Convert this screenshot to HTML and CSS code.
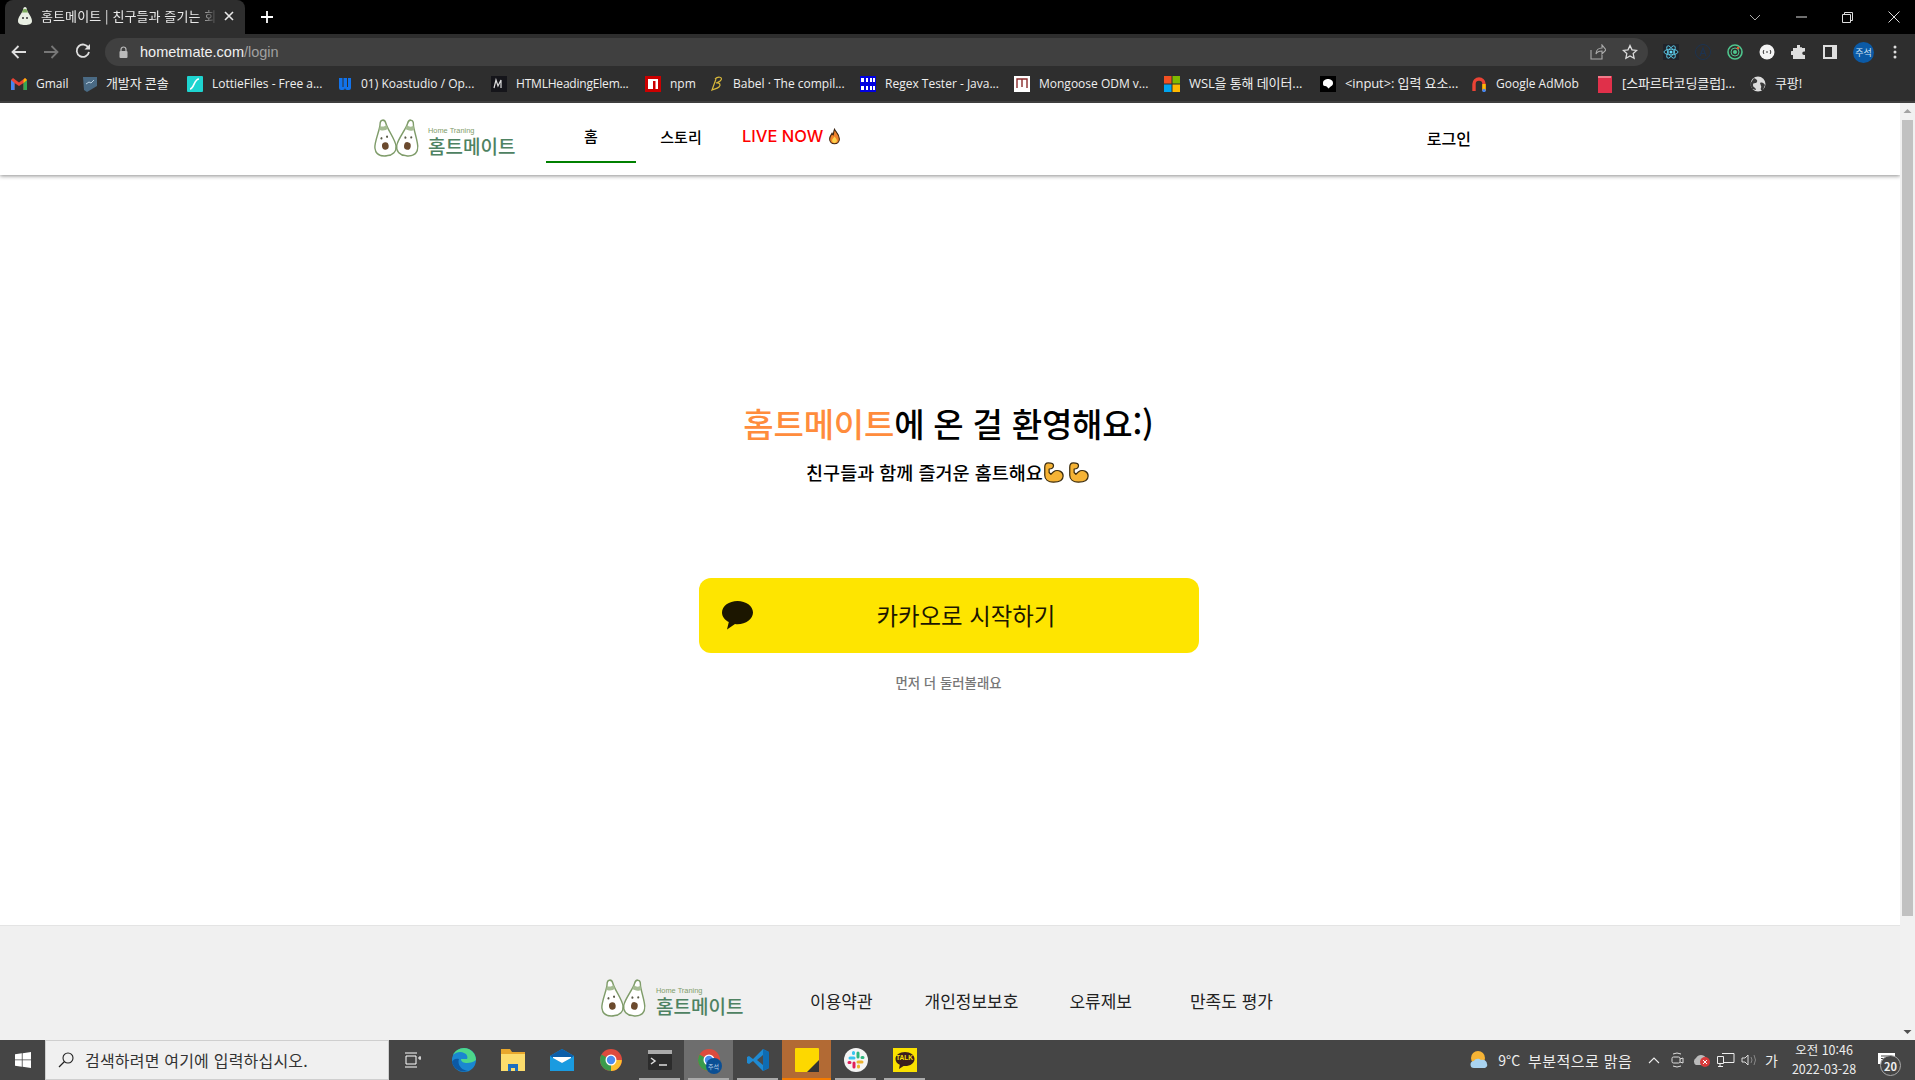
FILE: index.html
```html
<!DOCTYPE html>
<html lang="ko">
<head>
<meta charset="utf-8">
<title>홈트메이트</title>
<link rel="stylesheet" href="styles.css">
</head>
<body>
<svg class="defs" width="0" height="0">
  <defs>
    <symbol id="avocado" viewBox="0 0 26 38" preserveAspectRatio="none">
      <path d="M13 1c-2 0-3 1-3.400 4C9 10 1 22 1 28c0 6 5 9 12 9s12-3 12-9c0-6-8-18-8.600-23C16 2 15 1 13 1z" fill="#fff" stroke="#7f9c6a" stroke-width="1.600"/>
      <path d="M9.500 6c1 2 6 2 7 0l1.500 4c-2 2-8 2-10 0z" fill="#a6bd94"/>
      <circle cx="13" cy="27" r="3.800" fill="#6b4a2e"/>
      <circle cx="9.500" cy="19" r="1.200" fill="#5b5b4a"/>
      <circle cx="16" cy="18" r="1.200" fill="#5b5b4a"/>
    </symbol>
    <symbol id="biceps" viewBox="0 0 24 24">
      <path d="M6 1C3 1 2 3 2 6v9c0 5 4 8 10 8s11-2 11-7c0-5-5-7-9-6-2 1-4 3-5 4L7 12V8c2 0 5-1 5-4 0-2-3-3-6-3z" fill="#f5b335" stroke="#3a2c10" stroke-width="1.400" stroke-linejoin="round"/>
    </symbol>
    <symbol id="fire" viewBox="0 0 16 20">
      <path d="M8 1c1 3 6 6 6 12 0 4-3 6-6 6s-6-2-6-6c0-3 2-5 3-7 .5 1 1 2 1.500 2C7 6 7 3 8 1z" fill="#f0822a" stroke="#3a2410" stroke-width="1.300"/>
      <path d="M8 10c1 2 3 3 3 5 0 2-1.500 3-3 3s-3-1-3-3c0-2 2-3 3-5z" fill="#fcd34d"/>
    </symbol>
    <symbol id="chromeicon" viewBox="0 0 24 24">
      <circle cx="12" cy="12" r="11" fill="#dd4b3e"/>
      <path d="M12 12L2.500 6.500A11 11 0 0 0 12 23z" fill="#3a9b4b"/>
      <path d="M12 12h10.800A11 11 0 0 1 12 23z" fill="#fbc02d"/>
      <circle cx="12" cy="12" r="5.500" fill="#fff"/>
      <circle cx="12" cy="12" r="4.200" fill="#4a8df0"/>
    </symbol>
  </defs>
</svg>

<div class="tabstrip">
  <div class="tab">
    <svg class="tab-fav" width="16" height="18" viewBox="0 0 16 18"><path d="M8 0c-1 0-2 1-2 3C5 6 1 10 1 14c0 3 3 4 7 4s7-1 7-4c0-4-4-8-5-11 0-2-1-3-2-3z" fill="#e9efe3"/><path d="M5 5.500h6L9.500 2h-3z" fill="#7fae5f"/><circle cx="6" cy="11" r="1" fill="#333"/><circle cx="10" cy="11" r="1" fill="#333"/></svg>
    <span class="tab-title">홈트메이트 | 친구들과 즐기는 회</span>
    <svg class="tab-close" width="10" height="10" viewBox="0 0 10 10"><path d="M1 1l8 8M9 1l-8 8" stroke="#e8e8e8" stroke-width="1.600"/></svg>
  </div>
  <svg class="tab-new" width="12" height="12" viewBox="0 0 12 12"><path d="M6 0v12M0 6h12" stroke="#fff" stroke-width="1.800"/></svg>
  <div class="window-controls">
    <svg class="wc wc-chev" width="12" height="7" viewBox="0 0 12 7"><path d="M1 1l5 5 5-5" fill="none" stroke="#aaa"/></svg>
    <svg class="wc wc-min" width="11" height="2" viewBox="0 0 11 2"><path d="M0 1h11" stroke="#ddd"/></svg>
    <svg class="wc wc-max" width="11" height="11" viewBox="0 0 11 11"><path d="M.5 2.500h8v8h-8zM2.500 2.500v-2h8v8h-2" fill="none" stroke="#ddd"/></svg>
    <svg class="wc" width="12" height="12" viewBox="0 0 12 12"><path d="M.5.500l11 11M11.500.500l-11 11" stroke="#ddd"/></svg>
  </div>
</div>

<div class="toolbar">
  <svg class="nav-ic" width="16" height="14" viewBox="0 0 16 14"><path d="M15 7H2M7.500 1L1.500 7l6 6" fill="none" stroke="#dedede" stroke-width="1.800"/></svg>
  <svg class="nav-ic" width="16" height="14" viewBox="0 0 16 14"><path d="M1 7h13M8.500 1l6 6-6 6" fill="none" stroke="#777" stroke-width="1.800"/></svg>
  <svg class="nav-ic" width="16" height="16" viewBox="0 0 16 16"><path d="M13.500 5A6.200 6.200 0 1 0 14 9" fill="none" stroke="#dedede" stroke-width="1.800"/><path d="M15 1v5.500H9.500z" fill="#dedede"/></svg>
  <div class="omnibox">
    <svg class="lock" width="9" height="12" viewBox="0 0 9 12"><path d="M2 5V3.500a2.500 2.500 0 0 1 5 0V5" fill="none" stroke="#bbb" stroke-width="1.200"/><rect x=".5" y="5" width="8" height="7" rx="1" fill="#bbb"/></svg>
    <span class="url">hometmate.com<span class="url-path">/login</span></span>
    <svg class="omni-ic" width="16" height="16" viewBox="0 0 16 16"><path d="M1 6v9h11v-4M6 10c0-4 3-6 6-6V1l4 5-4 4V7c-3 0-5 1-6 3z" fill="none" stroke="#aaa" stroke-width="1.100"/></svg>
    <svg class="omni-ic" width="16" height="16" viewBox="0 0 16 16"><path d="M8 1.500l2 4.300 4.700.6-3.500 3.200.9 4.700L8 12l-4.100 2.300.9-4.700L1.300 6.400 6 5.800z" fill="none" stroke="#ddd" stroke-width="1.300"/></svg>
  </div>
  <div class="ext-row">
    <svg width="16" height="16" viewBox="0 0 16 16"><rect width="16" height="16" fill="#20232a"/><circle cx="8" cy="8" r="1.500" fill="#61dafb"/><g fill="none" stroke="#61dafb" stroke-width=".8"><ellipse cx="8" cy="8" rx="7" ry="2.800"/><ellipse cx="8" cy="8" rx="7" ry="2.800" transform="rotate(60 8 8)"/><ellipse cx="8" cy="8" rx="7" ry="2.800" transform="rotate(120 8 8)"/></g></svg>
    <svg width="16" height="16" viewBox="0 0 16 16"><circle cx="8" cy="8" r="7.500" fill="none" stroke="#1d3350"/><path d="M5 12l3-8 3 8M6 9.500h4" fill="none" stroke="#1d3350" stroke-width="1.200"/></svg>
    <svg width="16" height="16" viewBox="0 0 16 16"><circle cx="8" cy="8" r="7" fill="none" stroke="#4fc58d" stroke-width="1.600"/><circle cx="8" cy="8" r="4" fill="none" stroke="#4fc58d"/><circle cx="8" cy="8" r="2" fill="#4fc58d"/><circle cx="11" cy="4" r="1.300" fill="#e4572e"/></svg>
    <svg width="16" height="16" viewBox="0 0 16 16"><circle cx="8" cy="8" r="7.500" fill="#f3f3f3"/><path d="M5 6c-1 1-1 3 0 4M11 6c1 1 1 3 0 4M7 8h2" fill="none" stroke="#333"/></svg>
    <svg width="16" height="16" viewBox="0 0 16 16"><path d="M6 1h3v2a1.500 1.500 0 0 0 2 0V4h3v3.500h-1a1.700 1.700 0 0 0 0 3.500h1v4H2v-4H1a2 2 0 0 1 0-4h1V4h4z" fill="#dedede"/></svg>
    <svg width="14" height="14" viewBox="0 0 14 14"><path d="M0 0h14v14H0zM2 2v10h7V2z" fill="#dedede" fill-rule="evenodd"/></svg>
    <span class="avatar">주석</span>
    <svg width="4" height="14" viewBox="0 0 4 14"><circle cx="2" cy="2" r="1.500" fill="#ddd"/><circle cx="2" cy="7" r="1.500" fill="#ddd"/><circle cx="2" cy="12" r="1.500" fill="#ddd"/></svg>
  </div>
</div>

<div class="bookmarks">
  <div class="bm"><svg width="16" height="12" viewBox="0 0 16 12"><path d="M0 2v10h3.500V5L8 8l4.500-3v7H16V2l-2-2-6 4.500L2 0z" fill="#ea4335"/><path d="M0 2v10h3.500V5z" fill="#4285f4"/><path d="M16 2v10h-3.500V5z" fill="#34a853"/><path d="M14 0l2 2-3.500 3V2z" fill="#fbbc05"/></svg><span class="bm-t w31">Gmail</span></div>
  <div class="bm"><svg width="14" height="16" viewBox="0 0 14 16"><path d="M0 1h14v9l-10 6-3-2z" fill="#4a6a84"/><path d="M3 8l3-2 2 1 3-3" fill="none" stroke="#b9cfe0"/></svg><span class="bm-t ko w65">개발자 콘솔</span></div>
  <div class="bm"><svg width="16" height="16" viewBox="0 0 16 16"><rect width="16" height="16" rx="1" fill="#1ed4d0"/><path d="M3 13c4 0 4-10 9-10" fill="none" stroke="#fff" stroke-width="1.600"/></svg><span class="bm-t w110">LottieFiles - Free a...</span></div>
  <div class="bm"><svg width="14" height="14" viewBox="0 0 14 14"><path d="M1 1v10q0 2 2 2h2q2 0 2-2q0 2 2 2h2q2 0 2-2V1h-3v9H9V1H5.500v9h-1V1z" fill="#1273eb"/></svg><span class="bm-t w114">01) Koastudio / Op...</span></div>
  <div class="bm"><svg width="16" height="16" viewBox="0 0 16 16"><rect width="16" height="16" fill="#15151a"/><path d="M3 12l2-8 2 6 3-6 0 8" fill="none" stroke="#ddd" stroke-width="1.200"/></svg><span class="bm-t tight w113">HTMLHeadingElem...</span></div>
  <div class="bm"><svg width="16" height="16" viewBox="0 0 16 16"><rect width="16" height="16" fill="#cb0000"/><rect x="3" y="3" width="10" height="10" fill="#fff"/><rect x="8" y="5" width="2.500" height="8" fill="#cb0000"/></svg><span class="bm-t w24">npm</span></div>
  <div class="bm"><svg width="14" height="16" viewBox="0 0 14 16"><path d="M5 3c3-3 8-2 6 1-1 2-3 2-5 3 4-1 5 2 3 4-2 2-5 2-7 3L6 3" fill="none" stroke="#d9b93b" stroke-width="1.200"/></svg><span class="bm-t w111">Babel · The compil...</span></div>
  <div class="bm"><svg width="16" height="16" viewBox="0 0 16 16"><rect width="16" height="16" fill="#0000e0"/><path d="M1 2h3v4H1zM6 2h2v4H6zM10 2h2v4h-2zM13 2h2v4h-2zM1 10h3v4H1zM6 10h2v4H6zM10 10h2v4h-2zM13 10h2v4h-2z" fill="#fff"/></svg><span class="bm-t w113">Regex Tester - Java...</span></div>
  <div class="bm"><svg width="16" height="16" viewBox="0 0 16 16"><rect width="16" height="16" fill="#fff"/><path d="M3 12V3h10v9M8 3v8" fill="none" stroke="#8a2c2c" stroke-width="1.400"/></svg><span class="bm-t w109">Mongoose ODM v...</span></div>
  <div class="bm"><svg width="16" height="16" viewBox="0 0 16 16"><rect width="7.500" height="7.500" fill="#f25022"/><rect x="8.500" width="7.500" height="7.500" fill="#7fba00"/><rect y="8.500" width="7.500" height="7.500" fill="#00a4ef"/><rect x="8.500" y="8.500" width="7.500" height="7.500" fill="#ffb900"/></svg><span class="bm-t ko w115">WSL을 통해 데이터...</span></div>
  <div class="bm"><svg width="16" height="16" viewBox="0 0 16 16"><rect width="16" height="16" fill="#000"/><path d="M3 7c0-3 3-4 5-4s5 1 5 4-2 3-3 4-1 2-2 1-1-2-3-2-2-1-2-3z" fill="#fff"/></svg><span class="bm-t ko w110">&lt;input&gt;: 입력 요소...</span></div>
  <div class="bm"><svg width="16" height="16" viewBox="0 0 16 16"><path d="M3 15V8a5 5 0 0 1 10 0v7" fill="none" stroke="#ea4335" stroke-width="3.400"/><path d="M13 8v7" stroke="#fbbc05" stroke-width="3.400"/><circle cx="13" cy="14.500" r="1.700" fill="#4285f4"/></svg><span class="bm-t w85">Google AdMob</span></div>
  <div class="bm"><svg width="16" height="18" viewBox="0 0 16 18"><path d="M1 1h14v17H1z" fill="#e0304a"/><path d="M1 1h13v2H1z" fill="#f27a8a"/></svg><span class="bm-t ko w112">[스파르타코딩클럽]...</span></div>
  <div class="bm"><svg width="16" height="16" viewBox="0 0 16 16"><circle cx="8" cy="8" r="7.500" fill="#ddd"/><path d="M4 2c2 1 4 2 3 4S3 6 3 9s3 2 3 5l-4-1-2-5zM10 7c2-1 4 0 5 2l-2 5-2 0c-1-2 1-3 0-4z" fill="#3a3a3a"/></svg><span class="bm-t ko w29">쿠팡!</span></div>
</div>

<div class="viewport">
  <div class="page">
    <header class="site-header">
      <a class="logo">
        <span class="logo-marks">
          <svg class="mark-l" width="23" height="38"><use href="#avocado"/></svg>
          <svg class="mark-r" width="23" height="38"><use href="#avocado"/></svg>
        </span>
        <span class="logo-text"><span class="logo-sub">Home Traning</span><span class="logo-name">홈트메이트</span></span>
      </a>
      <nav class="site-nav">
        <a class="nav-item active">홈</a>
        <a class="nav-item">스토리</a>
        <a class="nav-item live">LIVE NOW <svg class="fire" width="13" height="17"><use href="#fire"/></svg></a>
      </nav>
      <a class="login">로그인</a>
    </header>
    <main class="login-main">
      <h1 class="headline"><span class="brand">홈트메이트</span>에 온 걸 환영해요:)</h1>
      <p class="subline">친구들과 함께 즐거운 홈트해요<svg width="21" height="21"><use href="#biceps"/></svg><svg class="arm2" width="21" height="21"><use href="#biceps"/></svg></p>
      <a class="kakao-btn">
        <svg class="kakao-ic" width="31" height="29" viewBox="0 0 31 29"><path d="M15.500 0C7 0 0 5 0 11.500c0 4 2.800 7.600 6.800 9.600L5 28.500l8-5.500c.8.100 1.700.2 2.500.2 8.500 0 15.500-5.200 15.500-11.700S24 0 15.500 0z" fill="#1c1600"/></svg>
        <span>카카오로 시작하기</span>
      </a>
      <a class="browse">먼저 더 둘러볼래요</a>
    </main>
    <footer class="site-footer">
      <a class="logo">
        <span class="logo-marks">
          <svg class="mark-l" width="23" height="38"><use href="#avocado"/></svg>
          <svg class="mark-r" width="23" height="38"><use href="#avocado"/></svg>
        </span>
        <span class="logo-text"><span class="logo-sub">Home Traning</span><span class="logo-name">홈트메이트</span></span>
      </a>
      <a class="foot-link l1">이용약관</a>
      <a class="foot-link l2">개인정보보호</a>
      <a class="foot-link l3">오류제보</a>
      <a class="foot-link l4">만족도 평가</a>
    </footer>
  </div>
  <div class="scrollbar">
    <svg width="15" height="17" viewBox="0 0 15 17"><path d="M7.500 6l-4 4h8z" fill="#a3a3a3"/></svg>
    <div class="thumb"></div>
    <svg width="15" height="17" viewBox="0 0 15 17"><path d="M7.500 11l-4-4h8z" fill="#505050"/></svg>
  </div>
</div>

<div class="taskbar">
  <div class="start"><svg width="16" height="16" viewBox="0 0 16 16"><path d="M0 2.300l6.800-1v6.200H0zM7.600 1.200L16 0v7.500H7.600zM0 8.300h6.800v6.400l-6.800-1zM7.600 8.300H16V16l-8.400-1.200z" fill="#fff"/></svg></div>
  <div class="search">
    <svg width="16" height="16" viewBox="0 0 16 16"><circle cx="10" cy="6" r="5" fill="none" stroke="#222" stroke-width="1.100"/><path d="M6.500 9.500L1 15" stroke="#222" stroke-width="1.200"/></svg>
    <span>검색하려면 여기에 입력하십시오.</span>
  </div>
  <div class="tb-apps">
    <div class="app taskview"><svg width="16" height="16" viewBox="0 0 16 16"><path d="M0 1h12M0 15h12M1 4h10v8H1zM14 5h2v2h-2z" fill="none" stroke="#fff"/></svg></div>
    <div class="app"><svg width="24" height="24" viewBox="0 0 24 24"><circle cx="12" cy="12" r="12" fill="#1a87d0"/><path d="M24 12c0-6-5-12-12-12C7 0 3 3 1 7c3-3 8-4 11-2 3 1 4 4 3 6h-6c0 3 3 4 6 4 3 0 7-1 9-3z" fill="#4dd88a"/><path d="M7 11c-2 5 2 11 9 12-8 2-15-3-16-9 1-2 3-4 7-3z" fill="#0c59a4"/></svg></div>
    <div class="app"><svg width="24" height="22" viewBox="0 0 24 22"><path d="M0 0h9l2 3h13v19H0z" fill="#e8a72c"/><path d="M0 5h24v17H0z" fill="#fcdc6c"/><path d="M7 22v-7h10v7h-3v-3h-4v3z" fill="#1d6fc0"/></svg></div>
    <div class="app"><svg width="24" height="22" viewBox="0 0 24 22"><path d="M0 7L12 0l12 7v15H0z" fill="#1a9be0"/><path d="M0 7l12 7 12-7-12-7z" fill="#0c5ea8"/><path d="M3 8h18v1l-9 5-9-5z" fill="#fff"/></svg></div>
    <div class="app"><svg width="24" height="24"><use href="#chromeicon"/></svg></div>
    <div class="app on"><svg width="24" height="20" viewBox="0 0 24 20"><rect width="24" height="20" rx="1" fill="#2c2c2c"/><rect width="24" height="4" fill="#aaa"/><path d="M3 8l4 3-4 3" fill="none" stroke="#ddd" stroke-width="1.500"/><path d="M11 15h8" stroke="#ddd" stroke-width="1.500"/></svg></div>
    <div class="app on active"><span class="chrome-badged"><svg width="24" height="24"><use href="#chromeicon"/></svg><span class="mini-avatar">주석</span></span></div>
    <div class="app on"><svg width="24" height="24" viewBox="0 0 24 24"><path d="M17 1l6 3v16l-6 3L7 13l-4 3-2-1V9l2-1 4 3z" fill="#1f8ad2"/><path d="M17 1l6 3v16l-6 3z" fill="#0e6cb3"/><path d="M17 7l-6 5 6 5z" fill="#4a4a4a"/></svg></div>
    <div class="app on sticky"><svg width="24" height="24" viewBox="0 0 24 24"><rect width="24" height="24" rx="1" fill="#fdd800"/><path d="M24 12v12H12z" fill="#333"/></svg></div>
    <div class="app on"><svg width="24" height="24" viewBox="0 0 24 24"><circle cx="12" cy="12" r="12" fill="#f4f4f4"/><g stroke-width="3" stroke-linecap="round"><path d="M6 10h4M9.500 4.500v1" stroke="#36c5f0"/><path d="M14 5v4M19 9.500h-1" stroke="#2eb67d"/><path d="M14 14h4M14.500 19v-1" stroke="#ecb22e"/><path d="M10 15v4M5 14.500h1" stroke="#e01e5a"/></g></svg></div>
    <div class="app on"><svg width="24" height="24" viewBox="0 0 24 24"><rect width="24" height="24" fill="#fae100"/><path d="M12 4C6.500 4 2.500 7 2.500 11c0 2.500 1.700 4.600 4.300 5.800L6 21l4.500-3c.5 0 1 .1 1.500.1 5.500 0 9.500-3.100 9.500-7.100S17.500 4 12 4z" fill="#3b1e1e"/></svg><span class="talk">TALK</span></div>
  </div>
  <div class="tray">
    <svg class="weather" width="20" height="20" viewBox="0 0 20 20"><circle cx="9" cy="8" r="7" fill="#f5b335"/><path d="M5 18a3.500 3.500 0 0 1 0-7c1-2.500 5-3 7-1 3-1 6 1 6 4 1 2-1 4-3 4z" fill="#a9d3f0"/></svg>
    <span class="temp">9°C</span>
    <span class="cond">부분적으로 맑음</span>
    <svg class="t-chev" width="12" height="7" viewBox="0 0 12 7"><path d="M1 6l5-5 5 5" fill="none" stroke="#eee" stroke-width="1.100"/></svg>
    <svg class="t-meet" width="13" height="16" viewBox="0 0 13 16"><rect x="1" y="5" width="8" height="6" rx="1.500" fill="none" stroke="#ddd"/><path d="M9 7l3-1v5l-3-1M2 2q4-2 8 0M2 14q4 2 8 0" fill="none" stroke="#ddd"/></svg>
    <span class="t-cloud"><svg width="18" height="14" viewBox="0 0 18 14"><path d="M4 12a4 4 0 0 1 0-7c2-4 8-4 10 0v7z" fill="#bbb"/><circle cx="13" cy="9" r="5" fill="#d83b3b"/><path d="M11 7l4 4M15 7l-4 4" stroke="#fff"/></svg></span>
    <svg class="t-net" width="18" height="14" viewBox="0 0 18 14"><path d="M5 .5h12v9H6M.5 3.500h6v7h-6zM3 11v2.500M1 13.500h5" fill="none" stroke="#eee"/></svg>
    <svg class="t-vol" width="18" height="14" viewBox="0 0 18 14"><path d="M1 5h3l3-3v10L4 9H1z" fill="none" stroke="#ddd"/><path d="M10 4q2 3 0 6M13 2q3 5 0 10" fill="none" stroke="#888"/></svg>
    <span class="ime">가</span>
    <div class="clock"><span>오전 10:46</span><span>2022-03-28</span></div>
    <span class="notif"><svg width="17" height="14" viewBox="0 0 17 14"><path d="M0 0h17v11H7l-3 3v-3H0z" fill="#fff"/><path d="M3 3h11M3 5.500h11M3 8h7" stroke="#444"/></svg><span class="notif-n">20</span></span>
  </div>
</div>
</body>
</html>
```
FILE: styles.css
```css
* { box-sizing: border-box; }
html, body { margin: 0; padding: 0; height: 100%; overflow: hidden; }
body {
  display: flex; flex-direction: column; height: 1080px; width: 1915px;
  font-family: "Noto Sans CJK KR", "Noto Sans", sans-serif; background: #fff; color: #000;
}
.defs { position: absolute; }
a { color: inherit; text-decoration: none; }
svg { display: block; flex: none; }

/* browser chrome */
.tabstrip { height: 34px; background: #000; display: flex; align-items: center; padding-left: 5px; flex: none; }
.tab { width: 240px; height: 34px; background: #2e2e2e; border-radius: 8px 8px 0 0; display: flex; align-items: center; padding: 0 11px 2px 12px; color: #e8e8e8; font-size: 13px; }
.tab-fav { margin-right: 8px; }
.tab-title { flex: 1; margin-bottom: 2px; white-space: nowrap; overflow: hidden; letter-spacing: .1px; -webkit-mask-image: linear-gradient(to right, #000 88%, transparent); mask-image: linear-gradient(to right, #000 88%, transparent); }
.tab-close { margin-left: 6px; }
.tab-new { margin-left: 16px; }
.window-controls { margin-left: auto; display: flex; align-items: center; padding-right: 15px; gap: 35px; }
.toolbar { height: 32px; background: #2e2e2e; display: flex; align-items: flex-end; padding-left: 11px; flex: none; }
.nav-ic { margin: 0 16px 7px 0; }
.nav-ic:nth-child(3) { margin-right: 0; }
.omnibox { margin-left: 14px; width: 1543px; height: 28px; background: #404040; border-radius: 14px; display: flex; align-items: center; padding: 0 10px 0 14px; font-size: 14px; color: #f0f0f0; }
.lock { margin-right: 12px; }
.url { flex: 1; font-family: "Liberation Sans", "Noto Sans", sans-serif; font-size: 14.500px; }
.url-path { color: #a0a0a0; }
.omni-ic { margin-left: 16px; }
.ext-row { display: flex; align-items: center; height: 28px; gap: 16px; padding-left: 15px; }
.ext-row svg:last-child { margin-left: 3px; }
.avatar { width: 21px; height: 21px; border-radius: 50%; background: #0b5aa6; color: #cfe2f5; font-size: 9px; display: flex; align-items: center; justify-content: center; }
.bookmarks { height: 37px; background: #2e2e2e; border-bottom: 2px solid #3e3e3e; display: flex; align-items: center; padding: 0 0 0 11px; gap: 16px; color: #efefef; font-size: 12px; flex: none; }
.bm { display: flex; align-items: center; gap: 9px; white-space: nowrap; }
.bm-t { font-family: "Open Sans", "Noto Sans CJK KR", sans-serif; display: block; font-size: 12px; }
.bm-t.tight { letter-spacing: -.2px; }
.bm-t.ko { font-size: 13px; letter-spacing: -.1px; margin-top: -2px; }
.w24 { width: 24px; } .w29 { width: 29px; } .w31 { width: 31px; } .w65 { width: 65px; }
.w85 { width: 85px; } .w109 { width: 109px; } .w110 { width: 110px; } .w111 { width: 111px; } .w112 { width: 112px; }
.w113 { width: 113px; } .w114 { width: 114px; } .w115 { width: 115px; }

/* page */
.viewport { flex: 1; display: flex; min-height: 0; }
.page { flex: 1; display: flex; flex-direction: column; min-width: 0; overflow: hidden; }
.site-header { height: 72px; flex: none; display: flex; align-items: flex-start; padding: 0 429px 0 373px; box-shadow: 0 1px 4px rgba(0,0,0,.45); position: relative; }
.logo { display: flex; align-items: flex-start; flex: none; height: 38px; width: 143px; margin-top: 16px; }
.logo-marks { display: flex; gap: 1px; margin-right: 8px; }
.mark-l { transform: rotate(-6deg); }
.mark-r { transform: rotate(8deg); }
.logo-text { display: flex; flex-direction: column; padding-top: 7px; }
.logo-sub { font-family: "Liberation Sans", sans-serif; font-size: 7.400px; line-height: 10px; color: #7f9c6a; white-space: nowrap; }
.logo-name { font-size: 19px; line-height: 20px; font-weight: 500; color: #4e8262; white-space: nowrap; }
.site-nav { display: flex; margin-left: 30px; height: 60px; }
.nav-item { width: 90px; height: 60px; display: flex; align-items: center; justify-content: center; font-size: 15px; font-weight: 500; padding-top: 7px; }
.nav-item.active { border-bottom: 2px solid #008000; padding-top: 7px; }
.nav-item.live { width: auto; margin-left: 16px; color: #ff0000; font-family: Inter, "Noto Sans", sans-serif; font-weight: 500; font-size: 16.500px; gap: 5px; padding-top: 6px; }
.login { margin-left: auto; margin-top: 23px; font-size: 16px; font-weight: 500; line-height: 24px; }
.login-main { height: 750px; flex: none; display: flex; flex-direction: column; align-items: center; padding: 224px 3px 0 0; }
.headline { margin: 0; font-size: 33px; line-height: 48px; font-weight: 500; letter-spacing: -.2px; }
.brand { color: #ff8c3c; }
.subline { margin: 12px 2px 0 0; display: flex; align-items: center; font-size: 18.500px; line-height: 26px; font-weight: 500; }
.arm2 { margin-left: 4px; }
.kakao-btn { margin-top: 93px; width: 500px; height: 75px; background: #fee500; border-radius: 12px; display: flex; align-items: center; padding: 0 0 2px 23px; font-size: 23.400px; color: #1c1600; }
.kakao-ic { margin-top: 2px; }
.kakao-btn span { margin-left: 124px; }
.browse { margin-top: 17px; font-size: 13.400px; line-height: 24px; color: #777; font-weight: 500; }
.site-footer { flex: 1; background: #f0f0f0; border-top: 1px solid #e4e4e4; display: flex; align-items: flex-start; padding-left: 600px; }
.site-footer .logo { margin-top: 53px; }
.site-footer .logo-marks { margin-right: 9px; }
.foot-link { font-size: 17px; line-height: 24px; margin-top: 63px; font-weight: 400; color: #222; white-space: nowrap; }
.l1 { margin-left: 67px; }
.l2 { margin-left: 52px; }
.l3 { margin-left: 51px; }
.l4 { margin-left: 58px; }
.scrollbar { width: 15px; flex: none; background: #f1f1f1; display: flex; flex-direction: column; }
.thumb { flex: none; height: 796px; margin: 0 2px; background: #c1c1c1; }
.scrollbar svg:last-child { margin-top: auto; }

/* taskbar */
.taskbar { height: 40px; flex: none; background: #454545; display: flex; color: #fff; }
.start { width: 45px; display: flex; align-items: center; justify-content: center; }
.search { width: 344px; background: #f0f0f0; border: 1px solid #cfcfcf; display: flex; align-items: center; padding-left: 12px; gap: 11px; color: #333; font-size: 16px; letter-spacing: .2px; padding-bottom: 1px; }
.tb-apps { display: flex; }
.app { width: 49px; height: 40px; display: flex; align-items: center; justify-content: center; position: relative; }
.app.taskview { width: 50px; padding-right: 3px; }
.app.on::after { content: ""; position: absolute; left: 4px; right: 4px; bottom: 0; height: 2px; background: #aaa; }
.app.active { background: #6e6e6e; }
.app.sticky { background: #b26a34; }
.app.sticky::after { left: 0; right: 0; background: #f57c00; }
.chrome-badged { position: relative; display: block; }
.mini-avatar { position: absolute; left: 9px; top: 10px; width: 16px; height: 16px; border-radius: 50%; background: #0b4f94; color: #bcd4ec; font-size: 6px; display: flex; align-items: center; justify-content: center; }
.talk { position: absolute; left: 15px; top: 14px; width: 19px; text-align: center; font-family: "Liberation Sans", sans-serif; font-size: 6.500px; font-weight: 700; color: #fae100; }
.tray { margin-left: auto; display: flex; align-items: center; font-size: 14px; color: #eee; padding-right: 8px; }
.temp { margin-left: 9px; font-size: 14px; }
.cond { margin-left: 8px; font-size: 15px; letter-spacing: .4px; }
.t-chev { margin-left: 16px; }
.t-meet { margin-left: 11px; }
.t-cloud { margin-left: 8px; }
.t-net { margin-left: 7px; }
.t-vol { margin-left: 6px; }
.ime { margin-left: 6px; }
.clock { width: 90px; margin-left: 1px; padding: 0 2px 2px; display: flex; flex-direction: column; align-items: center; font-size: 12.500px; line-height: 19px; }
.notif { position: relative; width: 38px; height: 40px; display: flex; align-items: center; padding-left: 9px; }
.notif-n { position: absolute; left: 11px; top: 15px; width: 21px; height: 21px; border: 1px solid #aaa; border-radius: 50%; background: #454545; font-size: 11px; font-weight: 700; display: flex; align-items: center; justify-content: center; }
```
